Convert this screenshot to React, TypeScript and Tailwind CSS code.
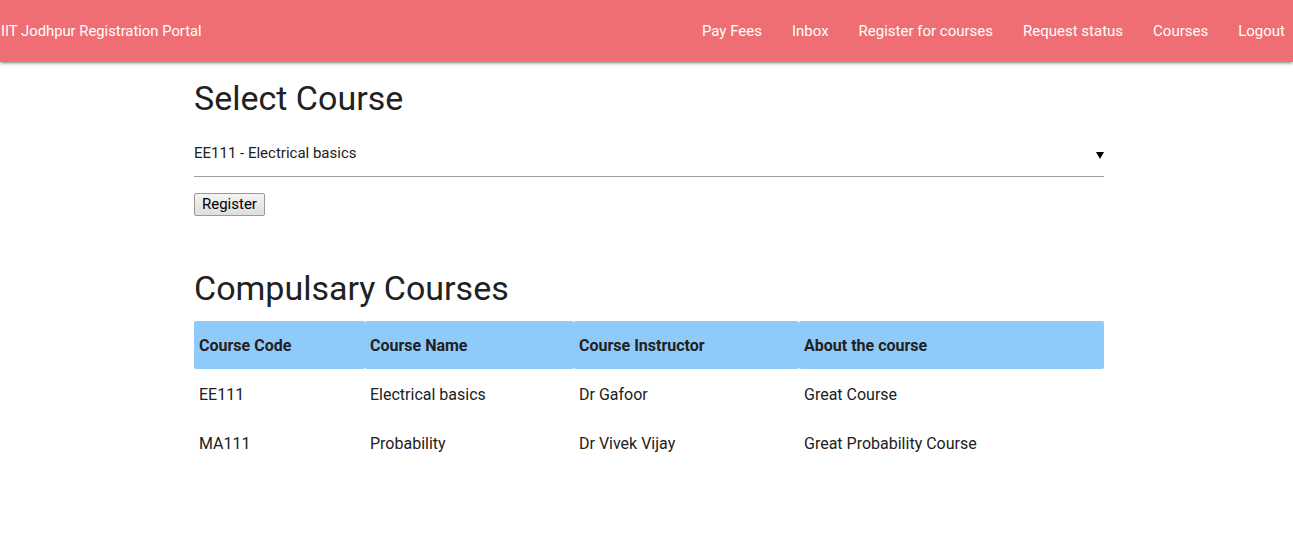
const navLinks = ['Pay Fees', 'Inbox', 'Register for courses', 'Request status', 'Courses', 'Logout'];

const courses = [
  { code: 'EE111', name: 'Electrical basics', instructor: 'Dr Gafoor', about: 'Great Course' },
  { code: 'MA111', name: 'Probability', instructor: 'Dr Vivek Vijay', about: 'Great Probability Course' },
];

const headers = [
  { label: 'Course Code', width: 'w-[171px]' },
  { label: 'Course Name', width: 'w-[209px]' },
  { label: 'Course Instructor', width: 'w-[225px]' },
  { label: 'About the course', width: 'w-[305px]' },
];

export default function App() {
  return (
    <div className="min-h-[550px] bg-white text-[15px] text-[#212121]" style={{ fontFamily: 'Roboto, "Noto Sans", sans-serif' }}>
      {/* Navbar */}
      <nav
        className="h-[62px] bg-[#ef6e73] text-white flex items-center justify-between pl-[1px] pr-[8px]"
        style={{
          boxShadow: '0 2px 2px 0 rgba(0,0,0,0.14), 0 3px 1px -2px rgba(0,0,0,0.12), 0 1px 5px 0 rgba(0,0,0,0.2)',
        }}
      >
        <a className="text-[14.8px] whitespace-nowrap">IIT Jodhpur Registration Portal</a>
        <ul className="flex items-center gap-[30px]">
          {navLinks.map((link) => (
            <li key={link} className="whitespace-nowrap text-[15px]">
              {link}
            </li>
          ))}
        </ul>
      </nav>

      <div className="ml-[194px] w-[910px]">
        {/* Select course */}
        <h4 className="mt-[16px] mb-[14px] text-[34px] leading-[40px] font-normal">Select Course</h4>
        <div className="relative h-[45px] border-b border-[#9e9e9e] flex items-center justify-between">
          <span className="text-[15px] -mt-[2px]">EE111 - Electrical basics</span>
          <svg width="8" height="8" viewBox="0 0 8 8" className="mt-[1px]">
            <path d="M0 1 L8 1 L4 8 Z" fill="#000" />
          </svg>
        </div>
        <button className="mt-[16px] h-[23px] px-[7px] text-[15px] leading-none text-black border border-[#9a9a9a] rounded-[2px] bg-gradient-to-b from-[#f4f4f4] to-[#dedede]">
          Register
        </button>

        {/* Compulsary courses */}
        <h4 className="mt-[52px] mb-[13px] text-[34px] leading-[40px] font-normal">Compulsary Courses</h4>
        <table className="w-[910px] border-collapse text-[16px]">
          <thead>
            <tr>
              {headers.map((h) => (
                <th
                  key={h.label}
                  className={`${h.width} bg-[#90caf9] rounded-[2px] pt-[16px] pb-[14px] px-[5px] text-left font-bold leading-[18px]`}
                >
                  {h.label}
                </th>
              ))}
            </tr>
          </thead>
          <tbody>
            {courses.map((c) => (
              <tr key={c.code}>
                <td className="pt-[16px] pb-[14px] px-[5px] leading-[19px]">{c.code}</td>
                <td className="pt-[16px] pb-[14px] px-[5px] leading-[19px]">{c.name}</td>
                <td className="pt-[16px] pb-[14px] px-[5px] leading-[19px]">{c.instructor}</td>
                <td className="pt-[16px] pb-[14px] px-[5px] leading-[19px]">{c.about}</td>
              </tr>
            ))}
          </tbody>
        </table>
      </div>
    </div>
  );
}
